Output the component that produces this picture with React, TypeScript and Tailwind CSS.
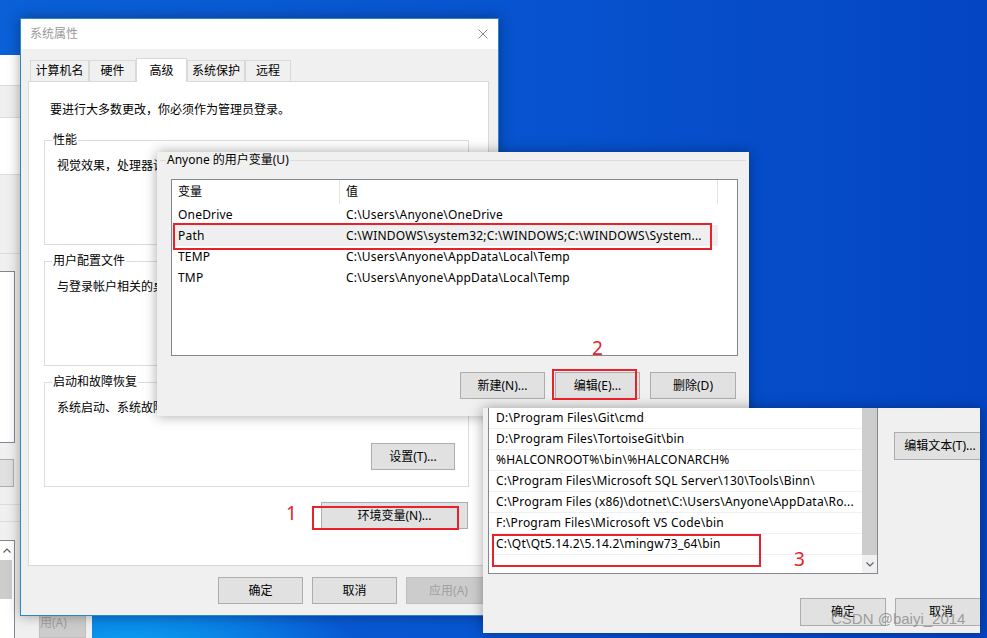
import React from "react";

const ff = "font-['Noto_Sans','Noto_Sans_CJK_SC',sans-serif]";

function Btn({
  children,
  className = "",
  disabled = false,
}: {
  children?: React.ReactNode;
  className?: string;
  disabled?: boolean;
}) {
  return (
    <div
      className={`flex shrink-0 items-center justify-center whitespace-nowrap border text-[12px] leading-[16px] ${
        disabled
          ? "border-[#bfbfbf] bg-[#cccccc] text-[#a0a0a0]"
          : "border-[#adadad] bg-[#e1e1e1] text-black"
      } ${className}`}
    >
      {children}
    </div>
  );
}

function Group({ title, text }: { title: string; text: string }) {
  return (
    <fieldset className="ml-[15px] mr-[19px] mt-[8px] h-[113px] border border-[#dcdcdc] first-of-type:mt-[14px]">
      <legend className="ml-[7px] px-[1px] leading-[16px]">{title}</legend>
      <div className="flex flex-col pl-[12px]">
        <p className="mt-[10px] whitespace-nowrap leading-[16px]">{text}</p>
        <Btn className="mr-[13px] mt-[27px] h-[27px] w-[84px] self-end">设置(T)...</Btn>
      </div>
    </fieldset>
  );
}

const tabs = [
  { label: "计算机名", w: "w-[59px]" },
  { label: "硬件", w: "w-[47px]" },
  { label: "高级", w: "w-[51px]", active: true },
  { label: "系统保护", w: "w-[58px]" },
  { label: "远程", w: "w-[46px]" },
];

const userVars = [
  ["OneDrive", "C:\\Users\\Anyone\\OneDrive"],
  ["Path", "C:\\WINDOWS\\system32;C:\\WINDOWS;C:\\WINDOWS\\System..."],
  ["TEMP", "C:\\Users\\Anyone\\AppData\\Local\\Temp"],
  ["TMP", "C:\\Users\\Anyone\\AppData\\Local\\Temp"],
];

const pathRows = [
  "D:\\Program Files\\Git\\cmd",
  "D:\\Program Files\\TortoiseGit\\bin",
  "%HALCONROOT%\\bin\\%HALCONARCH%",
  "C:\\Program Files\\Microsoft SQL Server\\130\\Tools\\Binn\\",
  "C:\\Program Files (x86)\\dotnet\\C:\\Users\\Anyone\\AppData\\Ro...",
  "F:\\Program Files\\Microsoft VS Code\\bin",
  "C:\\Qt\\Qt5.14.2\\5.14.2\\mingw73_64\\bin",
  "",
];

function BackWindow() {
  return (
    <div className="absolute left-0 top-[55px] flex h-[583px] w-[92px] flex-col bg-[#f0f0f0]">
      <div className="h-[31px] bg-white" />
      <div className="h-[32px] border-t border-[#dcdcdc]" />
      <div className="h-[59px] border-y border-[#dcdcdc] bg-white" />
      <div className="h-[80px]" />
      <div className="h-[18px] border-t border-[#dcdcdc]" />
      <div className="h-[175px] w-[15px] border-y border-r border-[#828790] bg-white" />
      <div className="h-[17px]" />
      <div className="h-[28px] w-[14px] border-y border-r border-[#adadad] bg-[#e1e1e1]" />
      <div className="h-[17px]" />
      <div className="h-[18px] border-t border-[#dcdcdc]" />
      <div className="h-[19px] border-t border-[#dcdcdc]" />
      <div className="flex flex-1">
        <div className="flex w-[15px] flex-col border-r border-t border-[#828790] bg-white">
          <div className="flex h-[19px] w-[14px] items-center justify-center">
            <svg width="8" height="5" viewBox="0 0 8 5">
              <polyline points="0.5,4.5 4,1 7.5,4.5" fill="none" stroke="#606060" strokeWidth="1.2" />
            </svg>
          </div>
          <div className="h-[39px] w-[12px] bg-[#cdcdcd]" />
        </div>
        <Btn disabled className="ml-[24px] mt-[68px] h-[30px] w-[47px] !justify-start">
          用(A)
        </Btn>
      </div>
    </div>
  );
}

function SystemProperties() {
  return (
    <div className="absolute left-[20px] top-[18px] flex h-[598px] w-[479px] flex-col border border-[#2f86c4] bg-[#f0f0f0] shadow-[0_0_12px_rgba(0,0,0,0.35)]">
      <div className="flex h-[30px] items-center justify-between bg-white pl-[9px] pr-[10px] text-[#9a9a9a]">
        <span>系统属性</span>
        <svg width="10" height="10" viewBox="0 0 10 10">
          <path d="M0.5 0.5L9.5 9.5M9.5 0.5L0.5 9.5" stroke="#8a8a8a" strokeWidth="1" />
        </svg>
      </div>

      <div className="ml-[9px] mt-[9px] flex h-[23px] items-end">
        {tabs.map((t) =>
          t.active ? (
            <div
              key={t.label}
              className={`relative z-10 -mb-[1px] flex h-[24px] items-center justify-center border-x border-t border-[#d9d9d9] bg-white ${t.w}`}
            >
              {t.label}
            </div>
          ) : (
            <div
              key={t.label}
              className={`flex h-[21px] items-center justify-center border-x border-t border-[#d9d9d9] bg-[#f0f0f0] ${t.w}`}
            >
              {t.label}
            </div>
          )
        )}
      </div>

      <div className="ml-[7px] flex h-[485px] w-[461px] flex-col border border-[#d9d9d9] bg-white">
        <p className="pl-[21px] pt-[20px] leading-[16px]">要进行大多数更改，你必须作为管理员登录。</p>
        <Group title="性能" text="视觉效果，处理器计划，内存使用，以及虚拟内存" />
        <Group title="用户配置文件" text="与登录帐户相关的桌面设置" />
        <Group title="启动和故障恢复" text="系统启动、系统故障和调试信息" />
        <Btn className="mr-[20px] mt-[15px] h-[27px] w-[147px] self-end">环境变量(N)...</Btn>
      </div>

      <div className="mt-[11px] flex justify-end gap-[9px] pr-[7px]">
        <Btn className="h-[27px] w-[85px]">确定</Btn>
        <Btn className="h-[27px] w-[85px]">取消</Btn>
        <Btn disabled className="h-[27px] w-[85px]">
          应用(A)
        </Btn>
      </div>
    </div>
  );
}

function EnvDialog() {
  return (
    <div className="absolute left-[157px] top-[152px] h-[264px] w-[592px] bg-[#f0f0f0] shadow-[0_0_12px_rgba(0,0,0,0.35)]">
      <fieldset className="mx-[3px] border-t border-[#dcdcdc]">
        <legend className="ml-[6px] px-[1px] leading-[16px]">Anyone 的用户变量(U)</legend>
        <div className="ml-[11px] mt-[11px] h-[177px] w-[567px] border border-[#828790] bg-white">
          <div className="flex h-[24px]">
            <div className="flex w-[168px] items-center border-r border-[#e5e5e5] pl-[6px]">变量</div>
            <div className="flex w-[378px] items-center border-r border-[#e5e5e5] pl-[6px]">值</div>
          </div>
          {userVars.map(([k, v]) => (
            <div
              key={k}
              className={`flex h-[21px] w-[546px] items-center whitespace-nowrap tracking-[0.2px] ${
                k === "Path" ? "bg-[#efefef]" : ""
              }`}
            >
              <div className="w-[168px] pl-[6px]">{k}</div>
              <div className="pl-[6px]">{v}</div>
            </div>
          ))}
        </div>
        <div className="mt-[16px] flex justify-end gap-[10px] pr-[10px]">
          <Btn className="h-[27px] w-[85px]">新建(N)...</Btn>
          <Btn className="h-[27px] w-[85px]">编辑(E)...</Btn>
          <Btn className="h-[27px] w-[86px]">删除(D)</Btn>
        </div>
      </fieldset>
    </div>
  );
}

function PathEditor() {
  return (
    <div className="absolute left-[483px] top-[408px] h-[225px] w-[497px] overflow-hidden bg-[#f0f0f0] shadow-[0_0_12px_rgba(0,0,0,0.35)]">
      <div className="flex">
        <div className="ml-[5px] flex h-[166px] w-[391px] border-x border-b border-[#828790] bg-white">
          <div className="w-[373px]">
            {pathRows.map((r, i) => (
              <div
                key={i}
                className="flex h-[21px] items-center whitespace-nowrap border-b border-[#f0f0f0] pl-[7px] tracking-[0.2px]"
              >
                {r}
              </div>
            ))}
          </div>
          <div className="flex w-[15px] flex-col">
            <div className="h-[147px] bg-[#cdcdcd]" />
            <div className="flex flex-1 items-center justify-center bg-[#f0f0f0]">
              <svg width="8" height="5" viewBox="0 0 8 5">
                <polyline points="0.5,0.5 4,4 7.5,0.5" fill="none" stroke="#606060" strokeWidth="1.2" />
              </svg>
            </div>
          </div>
        </div>
        <div className="ml-[16px] pt-[24px]">
          <Btn className="h-[28px] w-[92px]">编辑文本(T)...</Btn>
        </div>
      </div>
      <div className="mt-[24px] flex gap-[9px] pl-[317px]">
        <Btn className="h-[28px] w-[86px]">确定</Btn>
        <Btn className="h-[28px] w-[92px]">取消</Btn>
      </div>
    </div>
  );
}

export default function App() {
  return (
    <div
      className={`relative h-[638px] w-[987px] overflow-hidden bg-[radial-gradient(ellipse_230px_80px_at_130px_655px,#0aa8f6_0%,rgba(10,168,246,0)_100%),linear-gradient(90deg,#0a60d7_0%,#0753cf_55%,#0445c3_100%)] text-[12px] leading-[16px] text-black ${ff}`}
    >
      <BackWindow />
      <SystemProperties />
      <EnvDialog />
      <PathEditor />

      {/* red annotations */}
      <div className="absolute left-[312px] top-[506px] h-[24px] w-[147px] border-2 border-[#e8212b]" />
      <div className="absolute left-[286px] top-[504px] text-[19px] leading-[19px] text-[#e8212b]">1</div>
      <div className="absolute left-[173px] top-[223px] h-[27px] w-[539px] border-2 border-[#e8212b]" />
      <div className="absolute left-[552px] top-[369px] h-[31px] w-[85px] border-2 border-[#e8212b]" />
      <div className="absolute left-[592px] top-[339px] text-[19px] leading-[19px] text-[#e8212b]">2</div>
      <div className="absolute left-[492px] top-[534px] h-[33px] w-[269px] border-2 border-[#e8212b]" />
      <div className="absolute left-[794px] top-[550px] text-[19px] leading-[19px] text-[#e8212b]">3</div>

      <div className="absolute left-[831px] top-[610px] font-['Liberation_Sans',Arial,sans-serif] text-[15px] leading-[18px] text-[#8a8a8a]/80">
        CSDN @baiyi_2014
      </div>
    </div>
  );
}
